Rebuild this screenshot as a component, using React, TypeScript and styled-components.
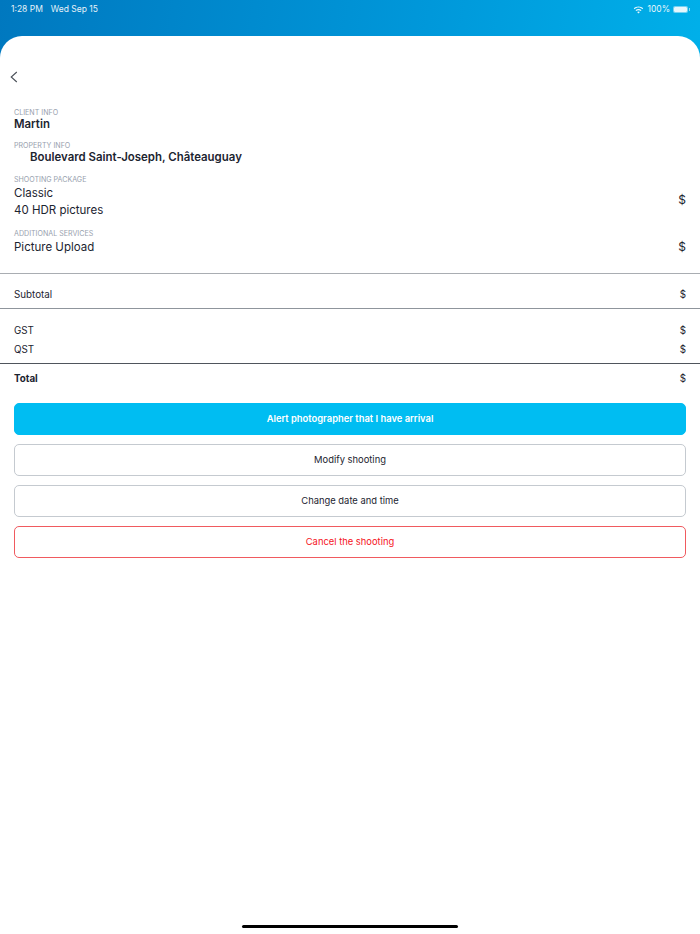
import React from 'react';
import styled, { createGlobalStyle } from 'styled-components';

const GlobalStyle = createGlobalStyle`
  html, body {
    margin: 0;
    padding: 0;
    background: #fff;
  }
  body {
    font-family: "Inter", "Liberation Sans", sans-serif;
    color: #1c2430;
  }
`;

export default function App() {
  return (
    <>
      <GlobalStyle />
      <Page>
        <StatusBar>
          <StatusGroup>
            <span>1:28 PM</span>
            <span>Wed Sep 15</span>
          </StatusGroup>
          <StatusGroup $gap={3}>
            <svg width="11" height="8" viewBox="0 0 22 16" fill="#fff">
              <path d="M11 3.2c3 0 5.7 1.2 7.8 3.1l1.6-1.7C17.9 2.2 14.6.8 11 .8S4.100 2.200 1.600 4.600l1.600 1.700C5.300 4.400 8 3.200 11 3.200z" />
              <path d="M11 8.300c1.700 0 3.200.6 4.400 1.700l1.600-1.700C15.400 6.800 13.300 5.900 11 5.900s-4.400.9-6 2.400L6.600 10c1.200-1.100 2.700-1.700 4.400-1.700z" />
              <path d="M11 11c-1.100 0-2 .4-2.700 1L11 15l2.700-3c-.7-.6-1.600-1-2.700-1z" />
            </svg>
            <span>100%</span>
            <Battery />
          </StatusGroup>
        </StatusBar>

        <Sheet>
          <BackButton aria-label="Back">
            <svg width="8" height="12" viewBox="0 0 8 12" fill="none" stroke="#4a5058" strokeWidth="1.1">
              <path d="M6.800 1 1.200 6l5.600 5" />
            </svg>
          </BackButton>

          <InfoBlock>
            <Label>CLIENT INFO</Label>
            <Strong>Martin</Strong>
          </InfoBlock>
          <InfoBlock $top={10}>
            <Label>PROPERTY INFO</Label>
            <Strong $indent={16}>Boulevard Saint-Joseph, Châteauguay</Strong>
          </InfoBlock>

          <ServiceRow $top={11}>
            <div>
              <Label>SHOOTING PACKAGE</Label>
              <ServiceName $top={1}>Classic</ServiceName>
              <ServiceName>40 HDR pictures</ServiceName>
            </div>
            <Price>$</Price>
          </ServiceRow>
          <ServiceRow $top={10}>
            <div>
              <Label>ADDITIONAL SERVICES</Label>
              <ServiceName $top={1}>Picture Upload</ServiceName>
            </div>
            <Price $alignEnd>$</Price>
          </ServiceRow>

          <Totals>
            <SubtotalRow>
              <span>Subtotal</span>
              <span>$</span>
            </SubtotalRow>
            <TaxGroup>
              <TotalRow>
                <span>GST</span>
                <span>$</span>
              </TotalRow>
              <TotalRow>
                <span>QST</span>
                <span>$</span>
              </TotalRow>
            </TaxGroup>
            <GrandTotalRow>
              <strong>Total</strong>
              <span>$</span>
            </GrandTotalRow>
          </Totals>

          <Actions>
            <ActionButton $variant="primary">Alert photographer that I have arrival</ActionButton>
            <ActionButton>Modify shooting</ActionButton>
            <ActionButton>Change date and time</ActionButton>
            <ActionButton $variant="danger">Cancel the shooting</ActionButton>
          </Actions>
        </Sheet>

        <HomeIndicator />
      </Page>
    </>
  );
}

const Page = styled.div`
  position: relative;
  display: flex;
  flex-direction: column;
  height: 934px;
  overflow: hidden;
  background: linear-gradient(100deg, #0078bf 0%, #0098da 50%, #00bdf2 100%);
`;

const StatusBar = styled.div`
  flex: none;
  display: flex;
  justify-content: space-between;
  height: 36px;
  padding: 4px 10px 0 11px;
  box-sizing: border-box;
  color: #fff;
  font-size: 8.5px;
  line-height: 11px;
  opacity: 0.9;
`;

const StatusGroup = styled.div<{ $gap?: number }>`
  display: flex;
  align-items: center;
  align-self: flex-start;
  gap: ${p => p.$gap ?? 8}px;
`;

const Battery = styled.div`
  position: relative;
  box-sizing: border-box;
  width: 15px;
  height: 7px;
  margin-right: 2px;
  background: #fff;
  border: 1px solid rgba(255, 255, 255, 0.5);
  background-clip: padding-box;
  border-radius: 2px;
  &::after {
    content: '';
    position: absolute;
    top: 1px;
    right: -3px;
    width: 1px;
    height: 3px;
    background: rgba(255, 255, 255, 0.6);
  }
`;

const Sheet = styled.main`
  flex: 1;
  padding: 35px 14px 0;
  background: #fff;
  border-radius: 22px 22px 0 0;
`;

const BackButton = styled.button`
  display: block;
  height: 12px;
  margin: 0 0 25px -4px;
  padding: 0;
  border: 0;
  background: none;
  line-height: 0;
`;

const InfoBlock = styled.section<{ $top?: number }>`
  margin-top: ${p => p.$top ?? 0}px;
`;

const Label = styled.div`
  color: #98a1ae;
  font-size: 7.1px;
  line-height: 9px;
`;

const Strong = styled.div<{ $indent?: number }>`
  padding-left: ${p => p.$indent ?? 0}px;
  font-size: 11.45px;
  font-weight: 600;
  line-height: 14px;
`;

const ServiceRow = styled.section<{ $top: number }>`
  display: flex;
  justify-content: space-between;
  align-items: center;
  margin-top: ${p => p.$top}px;
`;

const ServiceName = styled.div<{ $top?: number }>`
  margin-top: ${p => p.$top ?? 0}px;
  font-size: 11.5px;
  line-height: 17px;
`;

const Price = styled.span<{ $alignEnd?: boolean }>`
  font-size: 12px;
  line-height: 17px;
  ${p => (p.$alignEnd ? 'align-self: flex-end; margin-bottom: 1px;' : 'padding-top: 5px;')}
`;

const Totals = styled.div`
  margin: 17px -14px 0;
  font-size: 9.8px;
`;

const TotalRow = styled.div`
  display: flex;
  justify-content: space-between;
  align-items: center;
  height: 19px;
  padding: 0 14px;
`;

const SubtotalRow = styled(TotalRow)`
  height: 28px;
  padding-top: 6px;
  border-top: 1px solid #a9adb2;
`;

const TaxGroup = styled.div`
  padding: 12px 0 4px;
  border-top: 1px solid #8f959c;
`;

const GrandTotalRow = styled(TotalRow)`
  height: 28px;
  border-top: 1px solid #4f555c;
`;

const Actions = styled.div`
  display: flex;
  flex-direction: column;
  gap: 9px;
  margin-top: 11px;
`;

const variantStyles = {
  primary: 'background: #00bdf2; border-color: #00bdf2; color: #fff; font-weight: 600;',
  danger: 'background: #fff; border-color: #f05a5f; color: #f5141e;',
  plain: 'background: #fff; border-color: #c5cad0; color: #1c2430;',
};

const ActionButton = styled.button<{ $variant?: 'primary' | 'danger' }>`
  box-sizing: border-box;
  height: 32px;
  padding: 0 0 2px;
  border: 1px solid;
  border-radius: 5px;
  font-family: inherit;
  font-size: 9.4px;
  ${p => variantStyles[p.$variant ?? 'plain']}
`;

const HomeIndicator = styled.div`
  position: absolute;
  left: 242px;
  bottom: 6px;
  width: 216px;
  height: 3px;
  background: #000;
  border-radius: 2px;
`;
